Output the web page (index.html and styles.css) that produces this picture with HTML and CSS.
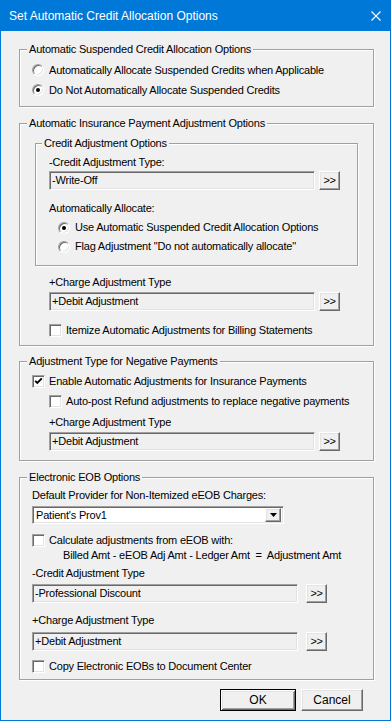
FILE: index.html
```html
<!DOCTYPE html>
<html>
<head>
<meta charset="utf-8">
<link rel="stylesheet" href="styles.css">
</head>
<body>
<div class="window">
  <div class="titlebar">
    <span class="title">Set Automatic Credit Allocation Options</span>
    <svg class="close" width="10" height="10" viewBox="0 0 10 10"><path d="M0.5 0.5 L9.5 9.5 M9.5 0.5 L0.5 9.5" stroke="#fff" stroke-width="1.1" fill="none"/></svg>
  </div>
  <div class="content">
    <div class="group g1">
      <span class="legend">Automatic Suspended Credit Allocation Options</span>
      <div class="opt r20"><span class="radio"></span><span class="lbl-r">Automatically Allocate Suspended Credits when Applicable</span></div>
      <div class="opt r20"><span class="radio on"></span><span class="lbl-r">Do Not Automatically Allocate Suspended Credits</span></div>
    </div>

    <div class="group g2">
      <span class="legend">Automatic Insurance Payment Adjustment Options</span>
      <div class="group inner">
        <span class="legend inl">Credit Adjustment Options</span>
        <div class="label">-Credit Adjustment Type:</div>
        <div class="frow m2"><div class="field">-Write-Off</div><div class="btn sm">&gt;&gt;</div></div>
        <div class="label m12">Automatically Allocate:</div>
        <div class="opt r19 m3 ind9"><span class="radio on"></span><span class="lbl-r">Use Automatic Suspended Credit Allocation Options</span></div>
        <div class="opt r19 ind9"><span class="radio"></span><span class="lbl-r">Flag Adjustment "Do not automatically allocate"</span></div>
      </div>
      <div class="ind14">
        <div class="label m10">+Charge Adjustment Type</div>
        <div class="frow m3"><div class="field">+Debit Adjustment</div><div class="btn sm">&gt;&gt;</div></div>
        <div class="opt r17 m11"><span class="check"></span><span class="lbl-c">Itemize Automatic Adjustments for Billing Statements</span></div>
      </div>
    </div>

    <div class="group g3">
      <span class="legend">Adjustment Type for Negative Payments</span>
      <div class="opt r17"><span class="check"><svg width="9" height="9" viewBox="0 0 9 9"><path d="M1.2 3.8 L3.3 6 L7.8 1.4" stroke="#000" stroke-width="1.9" fill="none"/></svg></span><span class="lbl-c">Enable Automatic Adjustments for Insurance Payments</span></div>
      <div class="ind17">
        <div class="opt r17 m3"><span class="check"></span><span class="lbl-c">Auto-post Refund adjustments to replace negative payments</span></div>
        <div class="label m6">+Charge Adjustment Type</div>
        <div class="frow m3"><div class="field">+Debit Adjustment</div><div class="btn sm">&gt;&gt;</div></div>
      </div>
    </div>

    <div class="group g4">
      <span class="legend">Electronic EOB Options</span>
      <div class="label">Default Provider for Non-Itemized eEOB Charges:</div>
      <div class="combo m4"><span class="combo-text">Patient's Prov1</span><span class="combo-btn"><svg width="7" height="4" viewBox="0 0 7 4"><path d="M0 0 H7 L3.5 4 Z" fill="#000"/></svg></span></div>
      <div class="opt r17 m8"><span class="check"></span><span class="lbl-c">Calculate adjustments from eEOB with:</span></div>
      <div class="label formula">Billed Amt - eEOB Adj Amt - Ledger Amt&nbsp; =&nbsp; Adjustment Amt</div>
      <div class="label m5">-Credit Adjustment Type</div>
      <div class="frow m4"><div class="field">-Professional Discount</div><div class="btn sm wide-gap">&gt;&gt;</div></div>
      <div class="label m11">+Charge Adjustment Type</div>
      <div class="frow m5"><div class="field">+Debit Adjustment</div><div class="btn sm wide-gap">&gt;&gt;</div></div>
      <div class="opt r17 m7"><span class="check"></span><span class="lbl-c">Copy Electronic EOBs to Document Center</span></div>
    </div>

    <div class="actions">
      <div class="btn big default">OK</div>
      <div class="btn big cancel">Cancel</div>
    </div>
  </div>
</div>
</body>
</html>
```
FILE: styles.css
```css
html, body {
  margin: 0;
  padding: 0;
  background: #f0f0f0;
}
.window {
  width: 391px;
  height: 721px;
  box-sizing: border-box;
  border: 1px solid #0078d7;
  border-top: none;
  background: #f0f0f0;
  font-family: "Liberation Sans", Arial, sans-serif;
  font-size: 11px;
  line-height: 13px;
  letter-spacing: -0.2px;
  color: #000;
}
.titlebar {
  height: 31px;
  margin: 0 -1px;
  background: #0078d7;
  display: flex;
  align-items: center;
  justify-content: space-between;
  padding: 0 10px 0 9px;
}
.title {
  color: #fff;
  font-size: 12px;
  letter-spacing: 0;
  line-height: 15px;
  padding-top: 1px;
}
.close {
  display: block;
  margin-top: 1px;
}
.content {
  padding-left: 18px;
}
.group {
  position: relative;
  border: 1px solid #a0a0a0;
  box-shadow: inset 1px 1px 0 #fff, 1px 1px 0 #fff;
  box-sizing: border-box;
}
.legend {
  position: absolute;
  top: -7px;
  left: 7px;
  padding: 0 2px 0 2px;
  background: #f0f0f0;
  white-space: nowrap;
}
.legend.inl { left: 6px; }
.g1 {
  width: 355px;
  margin-top: 18px;
  padding: 10px 0 6px 12px;
}
.g2 {
  width: 355px;
  margin-top: 16px;
  padding: 19px 15px 6px 15px;
}
.inner {
  padding: 12px 0 9px 13px;
}
.g3 {
  width: 355px;
  margin-top: 15px;
  padding: 11px 0 9px 12px;
}
.g4 {
  width: 355px;
  margin-top: 16px;
  padding: 11px 0 4px 12px;
}
.ind14 { padding-left: 14px; }
.ind17 { padding-left: 17px; }
.ind9 { padding-left: 9px; }
.m2 { margin-top: 2px; }
.m3 { margin-top: 3px; }
.m4 { margin-top: 4px; }
.m5 { margin-top: 5px; }
.m6 { margin-top: 6px; }
.m7 { margin-top: 7px; }
.m8 { margin-top: 8px; }
.m10 { margin-top: 10px; }
.m11 { margin-top: 11px; }
.m12 { margin-top: 12px; }
.label {
  height: 13px;
  white-space: nowrap;
}
.formula { padding-left: 31px; }
.opt {
  display: flex;
  align-items: center;
  white-space: nowrap;
}
.r20 { height: 20px; }
.r19 { height: 19px; }
.r17 { height: 17px; }
.radio {
  position: relative;
  width: 12px;
  height: 12px;
  box-sizing: border-box;
  border-radius: 50%;
  border: 1px solid;
  border-color: #a0a0a0 #fff #fff #a0a0a0;
  box-shadow: inset 1px 1px 0 #696969, inset -1px -1px 0 #e3e3e3;
  background: #fff;
  flex: none;
}
.radio.on::after {
  content: "";
  position: absolute;
  left: 3px;
  top: 3px;
  width: 4px;
  height: 4px;
  border-radius: 50%;
  background: #000;
}
.lbl-r { margin-left: 5px; }
.check {
  width: 13px;
  height: 13px;
  box-sizing: border-box;
  border: 1px solid;
  border-color: #a0a0a0 #fff #fff #a0a0a0;
  box-shadow: inset 1px 1px 0 #696969, inset -1px -1px 0 #e3e3e3;
  background: #fff;
  flex: none;
  display: flex;
  align-items: center;
  justify-content: center;
}
.check svg { display: block; }
.lbl-c { margin-left: 4px; }
.frow {
  display: flex;
  height: 19px;
}
.field {
  width: 266px;
  height: 19px;
  box-sizing: border-box;
  border: 1px solid;
  border-color: #a0a0a0 #fff #fff #a0a0a0;
  box-shadow: inset 1px 1px 0 #696969, inset -1px -1px 0 #e3e3e3;
  background: #f0f0f0;
  padding: 2px 0 0 2px;
  white-space: nowrap;
}
.btn {
  box-sizing: border-box;
  border: 1px solid;
  border-color: #fff #696969 #696969 #fff;
  box-shadow: inset -1px -1px 0 #a0a0a0, inset 1px 1px 0 #e3e3e3;
  background: #f0f0f0;
  display: flex;
  align-items: center;
  justify-content: center;
}
.btn.sm {
  width: 21px;
  height: 19px;
  margin-left: 4px;
  letter-spacing: -0.5px;
}
.btn.sm.wide-gap { margin-left: 8px; }
.combo {
  width: 252px;
  height: 18px;
  box-sizing: border-box;
  border: 1px solid;
  border-color: #a0a0a0 #fff #fff #a0a0a0;
  box-shadow: inset 1px 1px 0 #696969, inset -1px -1px 0 #e3e3e3;
  background: #fff;
  display: flex;
  align-items: center;
  justify-content: space-between;
  padding: 2px 2px 2px 2px;
}
.combo-text { padding-left: 1px; }
.combo-btn {
  width: 16px;
  height: 14px;
  box-sizing: border-box;
  border: 1px solid;
  border-color: #fff #696969 #696969 #fff;
  box-shadow: inset -1px -1px 0 #a0a0a0, inset 1px 1px 0 #e3e3e3;
  background: #f0f0f0;
  display: flex;
  align-items: center;
  justify-content: center;
}
.combo-btn svg { display: block; }
.actions {
  width: 355px;
  display: flex;
  justify-content: flex-end;
  margin-top: 9px;
  padding-right: 11px;
  box-sizing: border-box;
}
.btn.big {
  height: 22px;
  font-size: 12px;
  letter-spacing: 0;
}
.btn.default {
  width: 76px;
  border: 1px solid #000;
  box-shadow: inset 1px 1px 0 #fff, inset -1px -1px 0 #696969, inset 2px 2px 0 #e3e3e3, inset -2px -2px 0 #a0a0a0;
}
.btn.cancel {
  width: 62px;
  margin-left: 5px;
}
```
